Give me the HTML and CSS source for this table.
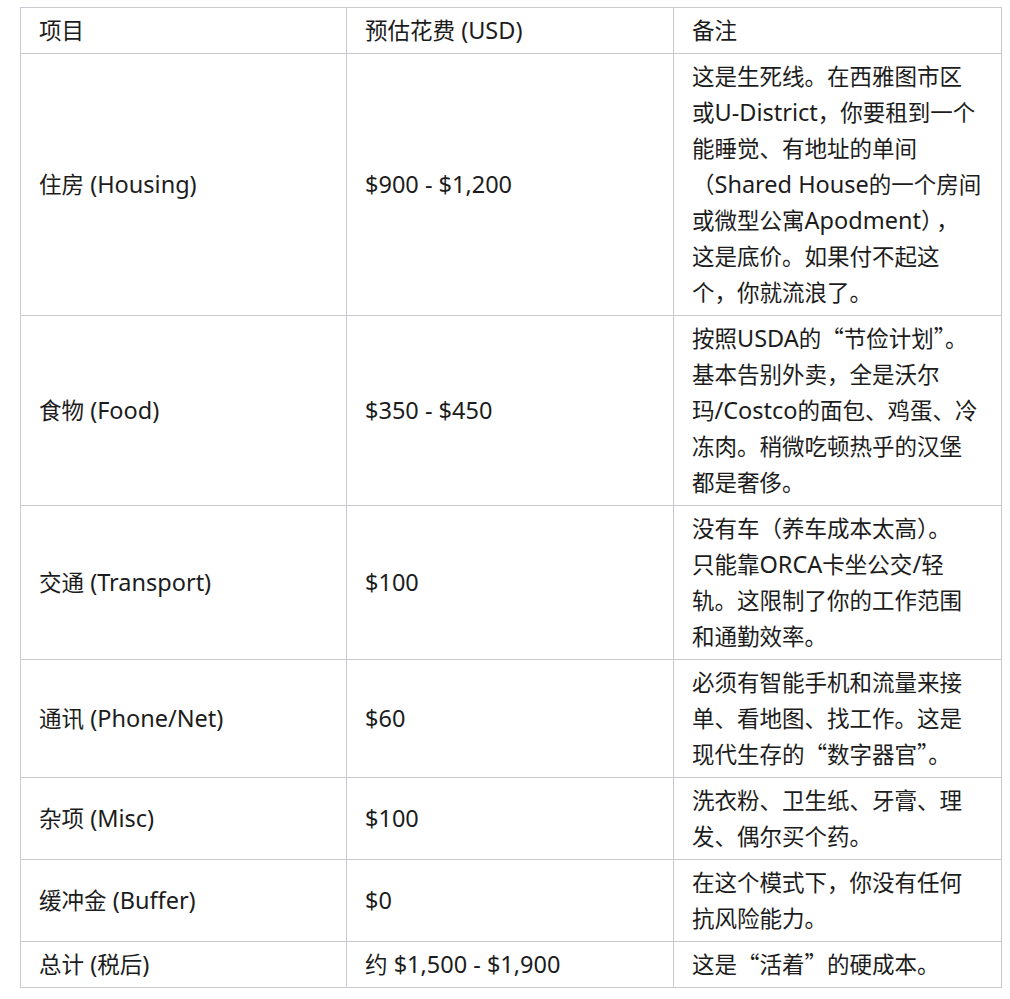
FILE: index.html
```html
<!DOCTYPE html>
<html lang="zh-CN">
<head>
<meta charset="utf-8">
<title>生存成本</title>
<link rel="stylesheet" href="styles.css">
</head>
<body>
<table class="cost-table">
  <colgroup>
    <col class="c1"><col class="c2"><col class="c3">
  </colgroup>
  <thead>
    <tr><th>项目</th><th>预估花费<span class="lat"> (USD)</span></th><th>备注</th></tr>
  </thead>
  <tbody>
    <tr>
      <td>住房<span class="lat"> (Housing)</span></td>
      <td><span class="lat">$900 - $1,200</span></td>
      <td class="note">这是生死线。在西雅图市区<br>或<span class="lat">U-District</span>，你要租到一个<br>能睡觉、有地址的单间<br>（<span class="lat">Shared House</span>的一个房间<br>或微型公寓<span class="lat">Apodment</span>）<span class="gap">，</span><br>这是底价。如果付不起这<br>个，你就流浪了。</td>
    </tr>
    <tr>
      <td>食物<span class="lat"> (Food)</span></td>
      <td><span class="lat">$350 - $450</span></td>
      <td class="note">按照<span class="lat">USDA</span>的“节俭计划”。<br>基本告别外卖，全是沃尔<br>玛<span class="lat">/Costco</span>的面包、鸡蛋、冷<br>冻肉。稍微吃顿热乎的汉堡<br>都是奢侈。</td>
    </tr>
    <tr>
      <td>交通<span class="lat"> (Transport)</span></td>
      <td><span class="lat">$100</span></td>
      <td class="note">没有车（养车成本太高）。<br>只能靠<span class="lat">ORCA</span>卡坐公交<span class="lat">/</span>轻<br>轨。这限制了你的工作范围<br>和通勤效率。</td>
    </tr>
    <tr>
      <td>通讯<span class="lat"> (Phone/Net)</span></td>
      <td><span class="lat">$60</span></td>
      <td class="note">必须有智能手机和流量来接<br>单、看地图、找工作。这是<br>现代生存的“数字器官”。</td>
    </tr>
    <tr>
      <td>杂项<span class="lat"> (Misc)</span></td>
      <td><span class="lat">$100</span></td>
      <td class="note">洗衣粉、卫生纸、牙膏、理<br>发、偶尔买个药。</td>
    </tr>
    <tr>
      <td>缓冲金<span class="lat"> (Buffer)</span></td>
      <td><span class="lat">$0</span></td>
      <td class="note">在这个模式下，你没有任何<br>抗风险能力。</td>
    </tr>
    <tr>
      <td>总计<span class="lat"> (</span>税后<span class="lat">)</span></td>
      <td>约<span class="lat"> $1,500 - $1,900</span></td>
      <td class="note">这是“活着”的硬成本。</td>
    </tr>
  </tbody>
</table>
</body>
</html>
```
FILE: styles.css
```css
html, body {
  margin: 0;
  padding: 0;
  background: #ffffff;
}
body {
  padding: 7px 10px 0 20px;
  font-family: "Noto Sans CJK SC", "Noto Sans", sans-serif;
  font-size: 22.5px;
  color: #1c1c1c;
}
.cost-table {
  border-collapse: collapse;
  table-layout: fixed;
  width: 981px;
}
.c1 { width: 326px; }
.c2 { width: 327px; }
.c3 { width: 328px; }
.cost-table th,
.cost-table td {
  border: 1px solid #c9c9d0;
  padding: 3px 18px 6px 18px;
  line-height: 36px;
  text-align: left;
  vertical-align: middle;
  font-weight: 400;
}
.lat {
  font-family: "Noto Sans", "Noto Sans CJK SC", sans-serif;
  font-size: 23.5px;
  line-height: 1;
}
.gap {
  margin-left: 4px;
}
.note {
  white-space: nowrap;
}
```
